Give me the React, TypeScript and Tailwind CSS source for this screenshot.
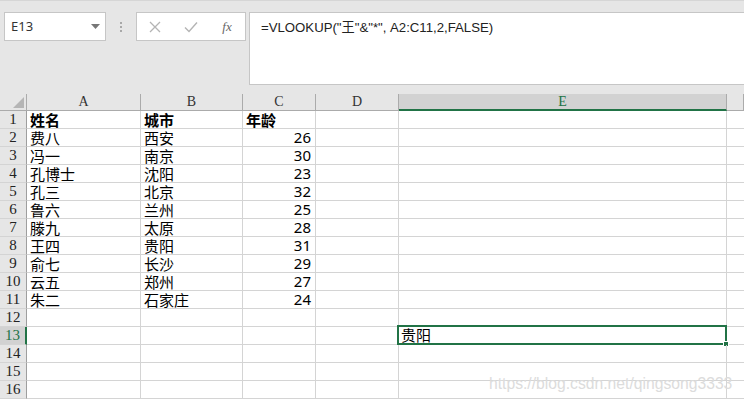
import React from "react";

const cols = ["A", "B", "C", "D", "E", ""];
const data: [string, string, string][] = [
  ["姓名", "城市", "年龄"],
  ["费八", "西安", "26"],
  ["冯一", "南京", "30"],
  ["孔博士", "沈阳", "23"],
  ["孔三", "北京", "32"],
  ["鲁六", "兰州", "25"],
  ["滕九", "太原", "28"],
  ["王四", "贵阳", "31"],
  ["俞七", "长沙", "29"],
  ["云五", "郑州", "27"],
  ["朱二", "石家庄", "24"],
];

const cjk = { fontFamily: '"Noto Sans CJK SC", "Noto Sans", sans-serif' };
const serif = { fontFamily: '"Liberation Serif", "DejaVu Serif", serif' };

export default function App() {
  const rows = Array.from({ length: 16 }, (_, i) => i + 1);
  return (
    <div className="w-[744px] h-[399px] overflow-hidden bg-white relative">
      {/* Toolbar / formula bar */}
      <div className="h-[94px] bg-[#e6e6e6] border-t border-[#d6d6d6] flex items-start pt-[11px] pl-[4px]">
        <div className="w-[102px] h-[29px] bg-white border border-[#c6c6c6] flex items-center justify-between pl-[6px] pr-[5px]">
          <span className="text-[13px] text-[#333]" style={{ fontFamily: '"Noto Sans", "Liberation Sans", sans-serif' }}>E13</span>
          <svg width="9" height="5" viewBox="0 0 9 5"><path d="M0 0h9L4.5 5z" fill="#777" /></svg>
        </div>
        <div className="w-[30px] h-[29px] flex flex-col items-center justify-center gap-[2px]">
          <span className="w-[2px] h-[2px] bg-[#a8a8a8]" />
          <span className="w-[2px] h-[2px] bg-[#a8a8a8]" />
          <span className="w-[2px] h-[2px] bg-[#a8a8a8]" />
        </div>
        <div className="w-[110px] h-[29px] bg-white border border-[#c6c6c6] flex items-center">
          <div className="w-[36px] flex justify-center">
            <svg width="12" height="12" viewBox="0 0 12 12"><path d="M1 1L11 11M11 1L1 11" stroke="#b4b4b4" strokeWidth="1.3" /></svg>
          </div>
          <div className="w-[36px] flex justify-center">
            <svg width="14" height="12" viewBox="0 0 14 12"><path d="M1 6.5L5 10.5L13 1.5" stroke="#b4b4b4" strokeWidth="1.4" fill="none" /></svg>
          </div>
          <div className="w-[36px] flex justify-center">
            <span className="text-[13px] italic text-[#666]" style={serif}>fx</span>
          </div>
        </div>
        <div className="ml-[3px] flex-1 h-[73px] bg-white border-l border-t border-b border-[#c6c6c6] pl-[11px] pt-[3px] leading-[20px]">
          <span className="text-[13.2px] text-[#222]" style={{ fontFamily: '"Liberation Sans", "Noto Sans CJK SC", sans-serif' }}>
            =VLOOKUP("王"&amp;"*", A2:C11,2,FALSE)
          </span>
        </div>
      </div>

      {/* Sheet grid */}
      <div className="grid grid-cols-[27px_114px_102px_73px_83px_328px_1fr] grid-rows-[17px_repeat(16,18px)]">
        <div className="bg-[#e6e6e6] border-r border-b border-[#ababab] relative">
          <svg className="absolute right-[2px] bottom-[2px]" width="11" height="11" viewBox="0 0 11 11"><path d="M11 0V11H0z" fill="#b5b5b5" /></svg>
        </div>
        {cols.map((c, i) =>
          c === "E" ? (
            <div key={i} className="bg-[#d2d2d2] border-r border-[#ababab] border-b-[2px] border-b-[#217346] flex items-center justify-center text-[14px] leading-[16px] text-[#217346]" style={serif}>
              {c}
            </div>
          ) : (
            <div key={i} className="bg-[#e6e6e6] border-r border-b border-[#ababab] flex items-center justify-center text-[14px] leading-[16px] text-[#333]" style={serif}>
              {c}
            </div>
          )
        )}
        {rows.map((r) => {
          const d = data[r - 1];
          const sel = r === 13;
          return (
            <React.Fragment key={r}>
              <div
                className={
                  sel
                    ? "bg-[#d2d2d2] border-r-[2px] border-r-[#217346] border-b border-b-[#d4d4d4] flex items-center justify-center text-[15px] leading-[17px] text-[#217346]"
                    : "bg-[#e6e6e6] border-r border-r-[#9e9e9e] border-b border-b-[#d4d4d4] flex items-center justify-center text-[15px] leading-[17px] text-[#222]"
                }
                style={serif}
              >
                {r}
              </div>
              <div className={"border-r border-b border-[#d4d4d4] pl-[3px] text-[15px] leading-[17px] text-black" + (r === 1 ? " font-bold" : "")} style={cjk}>
                {d ? d[0] : ""}
              </div>
              <div className={"border-r border-b border-[#d4d4d4] pl-[3px] text-[15px] leading-[17px] text-black" + (r === 1 ? " font-bold" : "")} style={cjk}>
                {d ? d[1] : ""}
              </div>
              <div
                className={
                  "border-r border-b border-[#d4d4d4] text-[15px] leading-[17px] text-black " +
                  (r === 1 ? "font-bold pl-[3px]" : "text-right pr-[4px]")
                }
                style={r === 1 ? cjk : { fontFamily: '"Noto Sans", "Noto Sans CJK SC", sans-serif' }}
              >
                {d ? d[2] : ""}
              </div>
              <div className="border-r border-b border-[#d4d4d4]" />
              <div className="border-r border-b border-[#d4d4d4] relative">
                {sel && (
                  <div className="absolute left-[-2px] top-[-2px] right-[-1px] bottom-[-1px] border-[2px] border-[#217346] pl-[2px] text-[15px] leading-[16px] text-black" style={cjk}>
                    贵阳
                    <span className="absolute right-[-4px] bottom-[-4px] w-[6px] h-[6px] bg-[#217346] border border-white" />
                  </div>
                )}
              </div>
              <div className="border-b border-[#d4d4d4]" />
            </React.Fragment>
          );
        })}
      </div>

      <div className="absolute left-[489px] top-[372px] text-[15.7px] text-[#dcdcdc] pointer-events-none" style={{ fontFamily: '"Liberation Sans", sans-serif' }}>
        https://blog.csdn.net/qingsong3333
      </div>
    </div>
  );
}
